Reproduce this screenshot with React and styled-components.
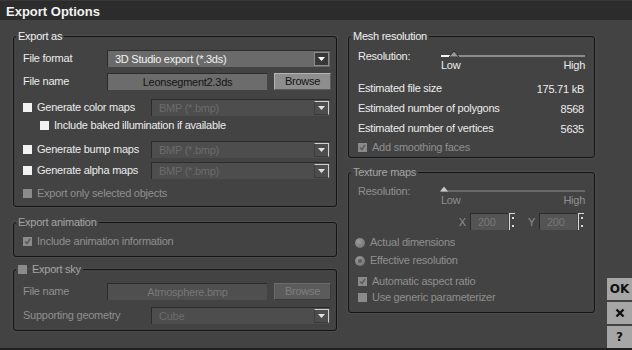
import React from 'react'
import styled, { createGlobalStyle } from 'styled-components'

const GlobalStyle = createGlobalStyle`
    html, body {
        margin: 0;
        padding: 0;
        background: #434343;
    }
    body {
        font-family: "Liberation Sans", Arial, sans-serif;
        font-size: 11px;
        letter-spacing: -0.25px;
        color: #ececec;
    }
`

const Window = styled.div`
    width: 632px;
    height: 350px;
    display: flex;
    flex-direction: column;
    background: #434343;
    overflow: hidden;
`

const TitleBar = styled.div`
    flex: none;
    height: 20px;
    padding-left: 6px;
    background: #2c2c2c;
    border-top: 1px solid #383838;
    box-sizing: border-box;
    font: bold 13px "Liberation Sans", Arial, sans-serif;
    letter-spacing: 0;
    line-height: 21px;
    color: #f2f2f2;
`

const Body = styled.div`
    flex: 1;
    min-height: 0;
    display: flex;
    padding: 10px 0 0 13px;
    border-bottom: 2px solid #202020;
`

const Column = styled.div`
    flex: none;
    width: ${p => p.$w}px;
    margin-right: ${p => p.$mr || 0}px;
    display: flex;
    flex-direction: column;
`

const Group = styled.fieldset`
    margin: ${p => p.$mt || 0}px 0 0;
    padding: ${p => p.$pt || 0}px ${p => p.$pr || 6}px ${p => p.$pb || 0}px 9px;
    min-width: 0;
    border: 1px solid #141414;
    border-radius: 3px;
    box-shadow: 0 0 0 1px #4c4c4c;
`

const Legend = styled.legend`
    display: flex;
    align-items: center;
    margin-left: -7px;
    padding: 0 2px;
    line-height: 13px;
    color: ${p => p.$dim ? '#a4a4a4' : '#f0f0f0'};
`

const Row = styled.div`
    display: flex;
    align-items: ${p => p.$top ? 'flex-start' : 'center'};
    justify-content: ${p => p.$end ? 'flex-end' : 'flex-start'};
    height: ${p => p.$h || 17}px;
    margin-top: ${p => p.$mt || 0}px;
    margin-left: ${p => p.$ml || 0}px;
`

const Label = styled.span`
    flex: none;
    width: ${p => p.$w ? `${p.$w}px` : 'auto'};
    line-height: 13px;
    white-space: nowrap;
    color: ${p => p.$dim ? '#8f8f8f' : '#ececec'};
`

const Value = styled.span`
    margin-left: auto;
    white-space: nowrap;
    color: #ececec;
`

const Select = styled.div`
    flex: 1;
    height: 17px;
    display: flex;
    box-sizing: border-box;
    background: ${p => p.$off ? '#4d4d4d' : '#6a6a6a'};
    border-top: 1px solid #2c2c2c;
    border-left: 1px solid #2c2c2c;
`

const SelectText = styled.span`
    flex: 1;
    padding-left: 7px;
    line-height: 16px;
    color: ${p => p.$off ? '#6b6b6b' : '#f2f2f2'};
`

const SelectArrow = styled.div`
    flex: none;
    width: 13px;
    margin: 1px 1px 1px 0;
    display: flex;
    align-items: center;
    justify-content: center;
    background: ${p => p.$off ? '#4d4d4d' : '#383838'};
    border-top: 1px solid ${p => p.$off ? '#d0d0d0' : '#8c8c8c'};
    border-right: 1px solid ${p => p.$off ? '#d0d0d0' : '#8c8c8c'};
    border-left: 1px solid ${p => p.$off ? '#3c3c3c' : '#8c8c8c'};
    border-bottom: 1px solid ${p => p.$off ? '#3c3c3c' : '#8c8c8c'};
`

const Field = styled.div`
    flex: none;
    width: 160px;
    height: 17px;
    box-sizing: border-box;
    text-align: center;
    line-height: 16px;
    background: ${p => p.$off ? '#4f4f4f' : '#6c6c6c'};
    color: ${p => p.$off ? '#777777' : '#141414'};
    border-top: 1px solid #2c2c2c;
    border-left: 1px solid #2c2c2c;
`

const Button = styled.div`
    flex: none;
    width: 57px;
    height: 17px;
    margin-left: 7px;
    box-sizing: border-box;
    text-align: center;
    line-height: 15px;
    background: ${p => p.$off ? '#5b5b5b' : '#8e8e8e'};
    color: ${p => p.$off ? '#7e7e7e' : '#121212'};
    border: 1px solid;
    border-color: ${p => p.$off ? '#6a6a6a #3a3a3a #3a3a3a #6a6a6a' : '#b4b4b4 #5a5a5a #5a5a5a #b4b4b4'};
`

const Box = styled.span`
    flex: none;
    width: 9px;
    height: 9px;
    margin-right: 5px;
    display: inline-flex;
    align-items: center;
    justify-content: center;
    background: ${p => p.$off ? '#8b8b8b' : '#f2f2f2'};
`

const Radio = styled.span`
    flex: none;
    width: 10px;
    height: 10px;
    margin: 0 5px 0 -3px;
    border-radius: 50%;
    background: radial-gradient(circle at 35% 35%, #9a9a9a, #6c6c6c);
    display: inline-flex;
    align-items: center;
    justify-content: center;
`

const Dot = styled.span`
    width: 4px;
    height: 4px;
    border-radius: 50%;
    background: #5a5a5a;
`

const Slider = styled.div`
    position: relative;
    flex: none;
    width: 144px;
    height: 22px;
`

const Track = styled.div`
    position: absolute;
    left: 0;
    right: 0;
    top: 5px;
    height: 2px;
    background: ${p => p.$off ? '#686868' : '#8a8a8a'};
`

const TrackFill = styled.div`
    position: absolute;
    left: 0;
    top: 5px;
    height: 2px;
    background: #f4f4f4;
`

const Thumb = styled.svg`
    position: absolute;
    top: 1px;
`

const Ends = styled.div`
    position: absolute;
    left: 0;
    right: 0;
    top: 9px;
    display: flex;
    justify-content: space-between;
    line-height: 13px;
    color: ${p => p.$off ? '#8f8f8f' : '#ececec'};
`

const SpinField = styled.div`
    width: 38px;
    height: 17px;
    box-sizing: border-box;
    padding-left: 7px;
    line-height: 16px;
    background: #545454;
    color: #777777;
    border-top: 1px solid #2c2c2c;
    border-left: 1px solid #2c2c2c;
`

const Axis = styled.span`
    margin: 0 4px 0 ${p => p.$ml || 0}px;
    color: #8f8f8f;
`

const SideButtons = styled.div`
    margin-left: auto;
    align-self: flex-end;
    display: flex;
    flex-direction: column;
    gap: 2px;
`

const SideButton = styled.div`
    width: 25px;
    height: 22px;
    display: flex;
    align-items: center;
    justify-content: center;
    background: #a6a6a6;
    color: #111111;
    font: bold 12px "DejaVu Sans", Arial, sans-serif;
    letter-spacing: 0;
`

const Arrow = ({ off }) => (
    <svg width="7" height="4" viewBox="0 0 7 4">
        <path d="M0 0 H7 L3.5 4 Z" fill={off ? '#e0e0e0' : '#ffffff'} />
    </svg>
)

const Tick = () => (
    <svg width="7" height="7" viewBox="0 0 7 7">
        <path d="M1 3.5 L3 5.5 L6 1" stroke="#5c5c5c" strokeWidth="1.6" fill="none" />
    </svg>
)

const Check = ({ off, on }) => <Box $off={off}>{on && <Tick />}</Box>

const Dropdown = ({ text, off }) => (
    <Select $off={off}>
        <SelectText $off={off}>{text}</SelectText>
        <SelectArrow $off={off}><Arrow off={off} /></SelectArrow>
    </Select>
)

const Spin = () => (
    <svg width="10" height="17" viewBox="0 0 10 17">
        <path d="M1.5 0 V17 M1 0.5 H7" stroke="#d8d8d8" strokeWidth="1" fill="none" />
        <rect x="4" y="4" width="2" height="2" fill="#d8d8d8" />
        <rect x="4" y="12" width="2" height="2" fill="#d8d8d8" />
    </svg>
)

const Range = ({ off, pos }) => (
    <Slider>
        <Track $off={off} />
        {!off && <TrackFill style={{ width: pos }} />}
        <Thumb width={off ? 8 : 10} height="6" viewBox="0 0 10 6" style={{ left: pos - (off ? 4 : 5) }}>
            <path d="M5 0 L10 6 H0 Z" fill={off ? '#c8c8c8' : '#9a9a9a'} stroke={off ? 'none' : '#1a1a1a'} strokeWidth="0.8" />
        </Thumb>
        <Ends $off={off}><span>Low</span><span>High</span></Ends>
    </Slider>
)

const App = () => (
    <Window>
        <GlobalStyle />
        <TitleBar>Export Options</TitleBar>
        <Body>
            <Column $w={324} $mr={11}>
                <Group $pt={7} $pb={6}>
                    <Legend>Export as</Legend>
                    <Row>
                        <Label $w={84}>File format</Label>
                        <Dropdown text="3D Studio export (*.3ds)" />
                    </Row>
                    <Row $mt={6}>
                        <Label $w={84}>File name</Label>
                        <Field>Leonsegment2.3ds</Field>
                        <Button>Browse</Button>
                    </Row>
                    <Row $mt={9}>
                        <Check />
                        <Label $w={114}>Generate color maps</Label>
                        <Dropdown text="BMP (*.bmp)" off />
                    </Row>
                    <Row $mt={3} $h={13} $ml={17}>
                        <Check />
                        <Label>Include baked illumination if available</Label>
                    </Row>
                    <Row $mt={9}>
                        <Check />
                        <Label $w={114}>Generate bump maps</Label>
                        <Dropdown text="BMP (*.bmp)" off />
                    </Row>
                    <Row $mt={4}>
                        <Check />
                        <Label $w={114}>Generate alpha maps</Label>
                        <Dropdown text="BMP (*.bmp)" off />
                    </Row>
                    <Row $mt={8} $h={13}>
                        <Check off />
                        <Label $dim>Export only selected objects</Label>
                    </Row>
                </Group>
                <Group $mt={9} $pt={6} $pb={8}>
                    <Legend $dim>Export animation</Legend>
                    <Row $h={13}>
                        <Check off on />
                        <Label $dim>Include animation information</Label>
                    </Row>
                </Group>
                <Group $mt={6} $pt={7} $pb={6}>
                    <Legend $dim><Check off />Export sky</Legend>
                    <Row>
                        <Label $w={84} $dim>File name</Label>
                        <Field $off>Atmosphere.bmp</Field>
                        <Button $off>Browse</Button>
                    </Row>
                    <Row $mt={7}>
                        <Label $w={128} $dim>Supporting geometry</Label>
                        <Dropdown text="Cube" off />
                    </Row>
                </Group>
            </Column>
            <Column $w={247}>
                <Group $pt={7} $pb={3} $pr={10}>
                    <Legend>Mesh resolution</Legend>
                    <Row $h={22} $top>
                        <Label $w={83}>Resolution:</Label>
                        <Range pos={13} />
                    </Row>
                    <Row $mt={10} $h={13}>
                        <Label>Estimated file size</Label>
                        <Value>175.71 kB</Value>
                    </Row>
                    <Row $mt={7} $h={13}>
                        <Label>Estimated number of polygons</Label>
                        <Value>8568</Value>
                    </Row>
                    <Row $mt={7} $h={13}>
                        <Label>Estimated number of vertices</Label>
                        <Value>5635</Value>
                    </Row>
                    <Row $mt={6} $h={13}>
                        <Check off on />
                        <Label $dim>Add smoothing faces</Label>
                    </Row>
                </Group>
                <Group $mt={8} $pt={6} $pb={8} $pr={7}>
                    <Legend $dim>Texture maps</Legend>
                    <Row $h={22} $top>
                        <Label $w={83} $dim>Resolution:</Label>
                        <Range off pos={3} />
                    </Row>
                    <Row $mt={6} $end>
                        <Axis>X</Axis>
                        <SpinField>200</SpinField>
                        <Spin />
                        <Axis $ml={10}>Y</Axis>
                        <SpinField>200</SpinField>
                        <Spin />
                    </Row>
                    <Row $mt={6} $h={13}>
                        <Radio />
                        <Label $dim>Actual dimensions</Label>
                    </Row>
                    <Row $mt={5} $h={13}>
                        <Radio><Dot /></Radio>
                        <Label $dim>Effective resolution</Label>
                    </Row>
                    <Row $mt={8} $h={13}>
                        <Check off on />
                        <Label $dim>Automatic aspect ratio</Label>
                    </Row>
                    <Row $mt={3} $h={13}>
                        <Check off />
                        <Label $dim>Use generic parameterizer</Label>
                    </Row>
                </Group>
            </Column>
            <SideButtons>
                <SideButton>OK</SideButton>
                <SideButton>
                    <svg width="10" height="10" viewBox="0 0 10 10">
                        <path d="M1.5 1.5 L8.5 8.5 M8.5 1.5 L1.5 8.5" stroke="#111" strokeWidth="2.4" />
                    </svg>
                </SideButton>
                <SideButton>?</SideButton>
            </SideButtons>
        </Body>
    </Window>
)

export default App
